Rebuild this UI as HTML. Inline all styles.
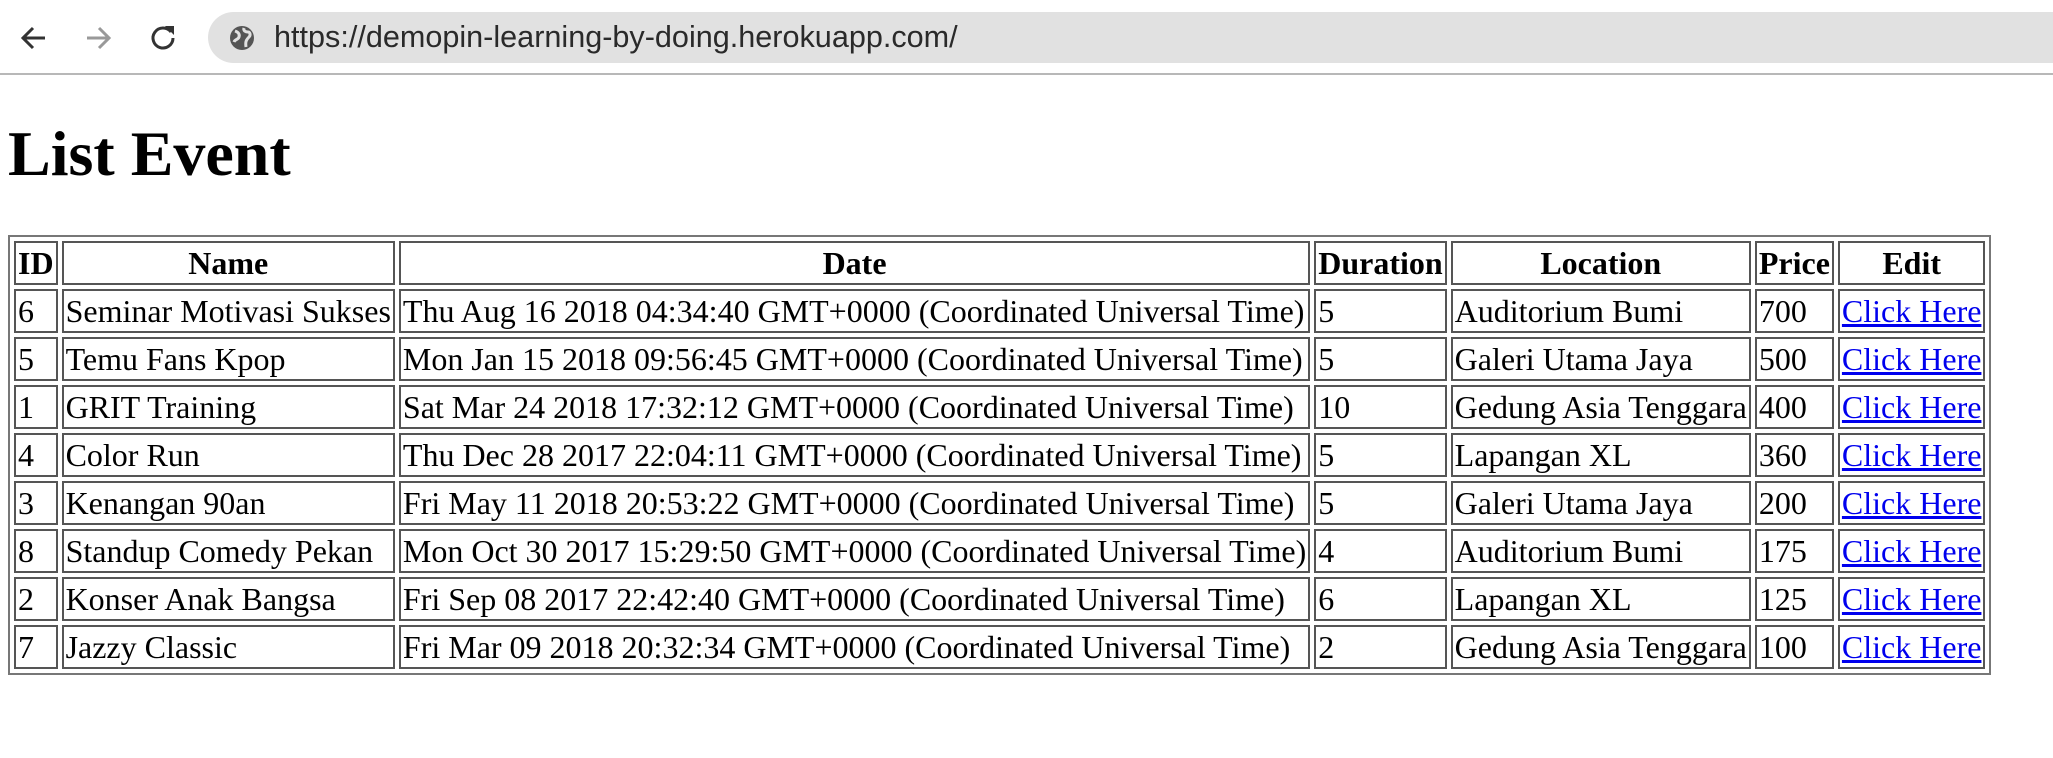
<!DOCTYPE html>
<html><head><meta charset="utf-8"><style>
html,body{margin:0;padding:0;background:#fff;width:2053px;height:758px;overflow:hidden}
.bar{position:absolute;left:0;top:0;width:2053px;height:73px;background:#fff;border-bottom:2px solid #b8b8b8}
.pill{position:absolute;left:208px;top:12px;width:1900px;height:51px;border-radius:26px;background:#e1e1e1}
.url{position:absolute;left:274px;top:17px;font:30.6px "Liberation Sans",sans-serif;color:#2a2a2a;line-height:40px}
.ic{position:absolute}
.wrap{position:absolute;left:0;top:75px}
.page{zoom:2;margin:0}
.page .in{margin:0 4px;font-family:"Liberation Serif",serif;font-size:16px}
h1{font-size:32px;margin:21px 0 22px 0;font-weight:bold;line-height:37px}
table{border:1px solid #777;border-spacing:2px;font-size:16px;border-collapse:separate}
td,th{border:1px solid #555;padding:1px;white-space:nowrap;line-height:18px}
th{font-weight:bold}
a{color:#0000ee}
</style></head><body>
<div class="bar">
<svg class="ic" style="left:20px;top:24px" width="28" height="28" viewBox="0 0 28 28"><path d="M25 14H4M13 4L3 14l10 10" stroke="#333" stroke-width="3" fill="none"/></svg>
<svg class="ic" style="left:84px;top:24px" width="28" height="28" viewBox="0 0 28 28"><path d="M3 14h21M15 4l10 10-10 10" stroke="#999" stroke-width="3" fill="none"/></svg>
<svg class="ic" style="left:149px;top:23px" width="28" height="28" viewBox="0 0 28 28"><path d="M22 9A10 10 0 1 0 24 15" stroke="#333" stroke-width="3" fill="none"/><path d="M16 3h9v9z" fill="#333"/></svg>
<div class="pill"></div>
<svg class="ic" style="left:229px;top:25px" width="26" height="26" viewBox="0 0 26 26"><circle cx="13" cy="13" r="12" fill="#555"/><path d="M6 6c3 1 5 3 4 6s-4 2-5 5M15 3c-1 3 2 4 4 4s3 3 1 5c-2 2-4 4-3 10" stroke="#e1e1e1" stroke-width="3" fill="none"/></svg>
<div class="url">https://demopin-learning-by-doing.herokuapp.com/</div>
</div>
<div class="wrap"><div class="page"><div class="in">
<h1>List Event</h1>
<table>
<tr><th>ID</th><th>Name</th><th>Date</th><th>Duration</th><th>Location</th><th>Price</th><th>Edit</th></tr>
<tr><td>6</td><td>Seminar Motivasi Sukses</td><td>Thu Aug 16 2018 04:34:40 GMT+0000 (Coordinated Universal Time)</td><td>5</td><td>Auditorium Bumi</td><td>700</td><td><a href="#">Click Here</a></td></tr>
<tr><td>5</td><td>Temu Fans Kpop</td><td>Mon Jan 15 2018 09:56:45 GMT+0000 (Coordinated Universal Time)</td><td>5</td><td>Galeri Utama Jaya</td><td>500</td><td><a href="#">Click Here</a></td></tr>
<tr><td>1</td><td>GRIT Training</td><td>Sat Mar 24 2018 17:32:12 GMT+0000 (Coordinated Universal Time)</td><td>10</td><td>Gedung Asia Tenggara</td><td>400</td><td><a href="#">Click Here</a></td></tr>
<tr><td>4</td><td>Color Run</td><td>Thu Dec 28 2017 22:04:11 GMT+0000 (Coordinated Universal Time)</td><td>5</td><td>Lapangan XL</td><td>360</td><td><a href="#">Click Here</a></td></tr>
<tr><td>3</td><td>Kenangan 90an</td><td>Fri May 11 2018 20:53:22 GMT+0000 (Coordinated Universal Time)</td><td>5</td><td>Galeri Utama Jaya</td><td>200</td><td><a href="#">Click Here</a></td></tr>
<tr><td>8</td><td>Standup Comedy Pekan</td><td>Mon Oct 30 2017 15:29:50 GMT+0000 (Coordinated Universal Time)</td><td>4</td><td>Auditorium Bumi</td><td>175</td><td><a href="#">Click Here</a></td></tr>
<tr><td>2</td><td>Konser Anak Bangsa</td><td>Fri Sep 08 2017 22:42:40 GMT+0000 (Coordinated Universal Time)</td><td>6</td><td>Lapangan XL</td><td>125</td><td><a href="#">Click Here</a></td></tr>
<tr><td>7</td><td>Jazzy Classic</td><td>Fri Mar 09 2018 20:32:34 GMT+0000 (Coordinated Universal Time)</td><td>2</td><td>Gedung Asia Tenggara</td><td>100</td><td><a href="#">Click Here</a></td></tr>
</table>
</div></div></div>
</body></html>
